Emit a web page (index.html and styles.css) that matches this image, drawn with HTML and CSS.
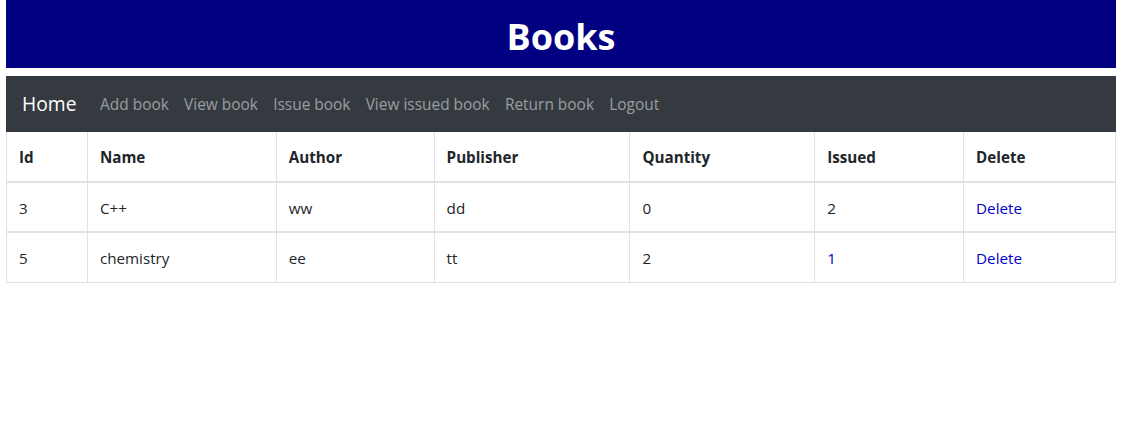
FILE: index.html
```html
<!DOCTYPE html>
<html>
<head>
<meta charset="utf-8">
<link rel="stylesheet" href="styles.css">
</head>
<body>
<div class="page">
  <header class="banner"><h1>Books</h1></header>
  <nav class="navbar">
    <a class="brand" href="#">Home</a>
    <a class="nav-link" href="#">Add book</a>
    <a class="nav-link" href="#">View book</a>
    <a class="nav-link" href="#">Issue book</a>
    <a class="nav-link" href="#">View issued book</a>
    <a class="nav-link" href="#">Return book</a>
    <a class="nav-link" href="#">Logout</a>
  </nav>
  <table class="books">
    <colgroup>
      <col class="c1"><col class="c2"><col class="c3"><col class="c4"><col class="c5"><col class="c6"><col class="c7">
    </colgroup>
    <thead>
      <tr><th>Id</th><th>Name</th><th>Author</th><th>Publisher</th><th>Quantity</th><th>Issued</th><th>Delete</th></tr>
    </thead>
    <tbody>
      <tr><td>3</td><td>C++</td><td>ww</td><td>dd</td><td>0</td><td>2</td><td><a class="link" href="#">Delete</a></td></tr>
      <tr><td>5</td><td>chemistry</td><td>ee</td><td>tt</td><td>2</td><td><a class="link" href="#">1</a></td><td><a class="link" href="#">Delete</a></td></tr>
    </tbody>
  </table>
</div>
</body>
</html>
```
FILE: styles.css
```css
* { box-sizing: border-box; }
html, body { margin: 0; padding: 0; background: #fff; }
body {
  font-family: "Open Sans", "Noto Sans", "Liberation Sans", sans-serif;
  font-size: 15.2px;
  line-height: 24px;
  color: #212529;
}
.page { width: 1110px; margin-left: 6px; }
.banner {
  background: #000080;
  height: 68px;
  display: flex;
  align-items: center;
  justify-content: center;
  padding-top: 5px;
}
.banner h1 {
  margin: 0;
  color: #fff;
  font-size: 36px;
  font-weight: 700;
  line-height: 1.2;
}
.navbar {
  margin-top: 8px;
  background: #343a40;
  height: 56px;
  display: flex;
  align-items: center;
  padding: 0 16px;
}
.navbar a { text-decoration: none; }
.brand {
  color: #fff;
  font-size: 19.3px;
  margin-right: 16px;
}
.nav-link {
  color: rgba(255,255,255,.5);
  padding: 0 7.6px;
  font-size: 15.45px;
}
.books {
  width: 100%;
  border-collapse: collapse;
}
.books th, .books td {
  border: 1px solid #dee2e6;
  padding: 12.5px 12px 11.5px;
  text-align: left;
  vertical-align: top;
  height: 50px;
}
.books th { font-weight: 700; border-bottom-width: 2px; border-top: 0; }
.books td { border-top-width: 2px; }
.link { color: #0000cc; text-decoration: none; }
.c1 { width: 81px; }
.c2 { width: 189px; }
.c3 { width: 158px; }
.c4 { width: 196px; }
.c5 { width: 185px; }
.c6 { width: 149px; }
.c7 { width: 152px; }
```
